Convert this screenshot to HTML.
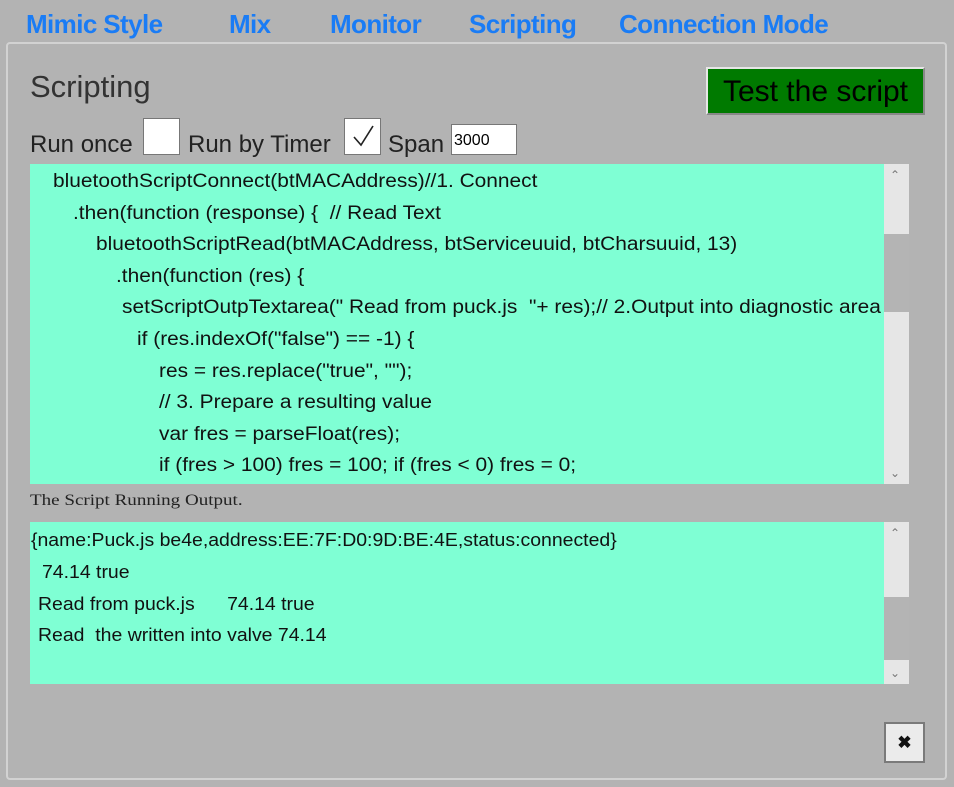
<!DOCTYPE html>
<html><head><style>
body{margin:0;width:954px;height:787px;background:#b3b3b3;position:relative;overflow:hidden;font-family:"Liberation Sans",sans-serif;}
.nav{position:absolute;top:9px;font-weight:bold;color:#1a7cf5;font-size:26px;letter-spacing:-0.6px;white-space:nowrap;}
.dlg{position:absolute;left:6px;top:42px;width:941px;height:738px;border:2px solid #d2d2d2;border-radius:4px;box-sizing:border-box;}
.abs{position:absolute;}
.ta{position:absolute;left:30px;width:879px;background:#7fffd4;overflow:hidden;color:#111;}
.ta div{position:absolute;white-space:pre;font-size:19px;transform:scaleX(1.1);transform-origin:left;}
.ta.o div{font-size:18px;transform:scaleX(1.08);}
.sb{position:absolute;right:0;width:25px;top:0;bottom:0;background:#e6e6e6;}
.th{position:absolute;left:0;right:0;background:#b4b4b4;}
.arr{position:absolute;left:6px;font-size:12px;color:#777;}
.lbl{position:absolute;top:131px;font-size:24px;color:#222;white-space:nowrap;}
</style></head><body>
<div class="nav" style="left:26px">Mimic Style</div>
<div class="nav" style="left:229px">Mix</div>
<div class="nav" style="left:330px">Monitor</div>
<div class="nav" style="left:469px">Scripting</div>
<div class="nav" style="left:619px">Connection Mode</div>
<div class="dlg"></div>
<div class="abs" style="left:30px;top:69px;font-size:31px;color:#333">Scripting</div>
<div class="abs" style="left:706px;top:67px;width:215px;height:44px;background:#007a00;border:2px solid #e6e6e6;border-right-color:#888;border-bottom-color:#888;font-size:30px;color:#000;text-align:center;line-height:46px;white-space:nowrap">Test the script</div>
<div class="lbl" style="left:30px">Run once</div>
<div class="abs" style="left:143px;top:118px;width:35px;height:35px;background:#fff;border:1px solid #777"></div>
<div class="lbl" style="left:188px">Run by Timer</div>
<div class="abs" style="left:344px;top:118px;width:35px;height:35px;background:#fff;border:1px solid #777"><svg width="35" height="35"><path d="M9 18 L16 26 L28 7" stroke="#222" stroke-width="1.6" fill="none"/></svg></div>
<div class="lbl" style="left:388px">Span</div>
<div class="abs" style="left:451px;top:124px;width:66px;height:31px;background:#fff;border:1px solid #777;font-size:16px;line-height:31px;padding-left:2px;box-sizing:border-box">3000</div>
<div class="ta" style="top:164px;height:320px">
<div style="left:23px;top:7px">bluetoothScriptConnect(btMACAddress)//1. Connect</div>
<div style="left:43px;top:39px">.then(function (response) {  // Read Text</div>
<div style="left:66px;top:70px">bluetoothScriptRead(btMACAddress, btServiceuuid, btCharsuuid, 13)</div>
<div style="left:86px;top:102px">.then(function (res) {</div>
<div style="left:92px;top:133px">setScriptOutpTextarea(" Read from puck.js  "+ res);// 2.Output into diagnostic area</div>
<div style="left:107px;top:165px">if (res.indexOf("false") == -1) {</div>
<div style="left:129px;top:197px">res = res.replace("true", "");</div>
<div style="left:129px;top:228px">// 3. Prepare a resulting value</div>
<div style="left:129px;top:260px">var fres = parseFloat(res);</div>
<div style="left:129px;top:291px">if (fres &gt; 100) fres = 100; if (fres &lt; 0) fres = 0;</div>
<div class="sb" style="transform:none"><div class="th" style="top:70px;height:78px"></div><span class="arr" style="top:4px">&#8963;</span><span class="arr" style="bottom:4px">&#8964;</span></div>
</div>
<div class="abs" style="left:30px;top:492px;font-family:'Liberation Serif',serif;font-size:16px;color:#222;transform:scaleX(1.19);transform-origin:left;white-space:nowrap">The Script Running Output.</div>
<div class="ta o" style="top:522px;height:162px">
<div style="left:1px;top:8px">{name:Puck.js be4e,address:EE:7F:D0:9D:BE:4E,status:connected}</div>
<div style="left:12px;top:40px">74.14 true</div>
<div style="left:8px;top:72px">Read from puck.js      74.14 true</div>
<div style="left:8px;top:103px">Read  the written into valve 74.14</div>
<div class="sb" style="transform:none"><div class="th" style="top:75px;height:63px"></div><span class="arr" style="top:4px">&#8963;</span><span class="arr" style="bottom:4px">&#8964;</span></div>
</div>
<div class="abs" style="left:884px;top:722px;width:37px;height:37px;background:#ebebeb;border:2px solid #7a7a7a;text-align:center;line-height:37px;font-size:17px;font-weight:bold;color:#111">&#10006;</div>
</body></html>
